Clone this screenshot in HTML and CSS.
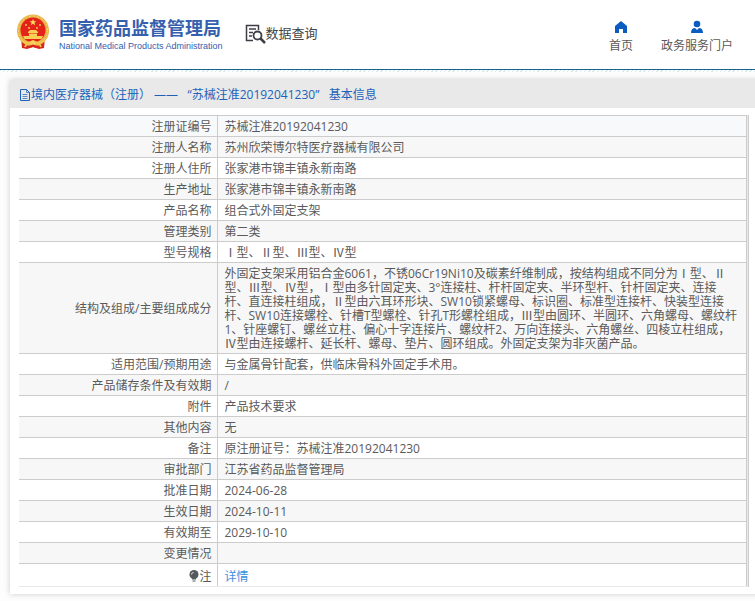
FILE: index.html
```html
<!DOCTYPE html>
<html lang="zh-CN">
<head>
<meta charset="utf-8">
<title>国家药品监督管理局 数据查询</title>
<link rel="stylesheet" href="styles.css">
</head>
<body>
<header class="header">
  <a class="brand" href="#">
    <svg class="emblem" viewBox="0 0 34 36" aria-hidden="true">
      <path fill="#d9261c" d="M5 24h24l-1 10-5 1-6-2-6 2-5-1z"/>
      <circle cx="17" cy="16.500" r="16" fill="#e9b548"/>
      <circle cx="17" cy="16.500" r="14.500" fill="none" stroke="#f7d876" stroke-dasharray="2 2"/>
      <circle cx="17" cy="16" r="12.500" fill="#e32219"/>
      <path fill="#fbdc63" d="M17 5l.9 2.300h2.500l-2 1.500.8 2.400-2.200-1.500-2.200 1.500.8-2.400-2-1.500h2.500z"/>
      <g fill="#f8cf55">
        <circle cx="10" cy="11" r=".9"/><circle cx="13" cy="14" r=".9"/><circle cx="21" cy="14" r=".9"/><circle cx="24" cy="11" r=".9"/>
        <path d="M12 18l2-2h6l2 2v1H12zM13 19.500h8V22h-8zM7 22h20l-1.500 3h-17z"/>
      </g>
      <path fill="none" stroke="#f4c64f" stroke-width="1.800" d="M5 26c4 4 8 3 12 1 4 2 8 3 12-1M9 33c1-3 4-5 8-5s7 2 8 5"/>
      <circle cx="17" cy="29" r="2.600" fill="#f7d060"/>
      <path fill="#d9261c" d="M12 32l5-1.500 5 1.500-1 2-4-1-4 1z"/>
    </svg>
    <span class="brand-text">
      <span class="brand-cn">国家药品监督管理局</span>
      <span class="brand-en">National Medical Products Administration</span>
    </span>
  </a>
  <a class="query" href="#">
    <svg class="query-icon" viewBox="0 0 21 20" fill="none" stroke="#3e3e46" aria-hidden="true">
      <path stroke-width="1.500" d="M8 16.500H1.500v-15h12V6M4 5h7M4 8.500h4M4 12h3"/>
      <circle cx="12.500" cy="11.500" r="4" stroke-width="1.800"/>
      <path stroke-width="2.500" d="M15.500 14.500l4.500 4.500"/>
    </svg>
    <span>数据查询</span>
  </a>
  <nav class="nav">
    <a href="#">
      <svg viewBox="0 0 14 14" aria-hidden="true"><path fill="#0a5cc0" d="M7 1l6 5v7H9V9H5v4H1V6z"/></svg>
      <span>首页</span>
    </a>
    <a href="#">
      <svg viewBox="0 0 14 14" aria-hidden="true"><circle cx="7" cy="4" r="3.300" fill="#0a5cc0"/><path fill="#0a5cc0" d="M1 13c0-3.500 1.500-5 4-5l2 2 2-2c2.500 0 4 1.500 4 5z"/></svg>
      <span>政务服务门户</span>
    </a>
  </nav>
</header>
<main class="panel">
  <h1 class="panel-title">
    <svg class="doc-icon" viewBox="0 0 12 12" fill="none" stroke="#1c62b9" aria-hidden="true"><path d="M1.500.5h6l3 3v8h-9z"/><path stroke-width=".7" d="M7.500.5v3h3M3.500 5.500h5M3.500 7.500h5M3.500 9.500h5"/></svg>
    <span>境内医疗器械（注册） ——   “苏械注准20192041230”   基本信息</span>
  </h1>
  <div class="table-wrap">
    <table class="info">
      <tr class="first"><th scope="row">注册证编号</th><td>苏械注准20192041230</td></tr>
      <tr><th scope="row">注册人名称</th><td>苏州欣荣博尔特医疗器械有限公司</td></tr>
      <tr><th scope="row">注册人住所</th><td>张家港市锦丰镇永新南路</td></tr>
      <tr><th scope="row">生产地址</th><td>张家港市锦丰镇永新南路</td></tr>
      <tr><th scope="row">产品名称</th><td>组合式外固定支架</td></tr>
      <tr><th scope="row">管理类别</th><td>第二类</td></tr>
      <tr><th scope="row">型号规格</th><td>Ⅰ型、Ⅱ型、Ⅲ型、Ⅳ型</td></tr>
      <tr><th scope="row">结构及组成/主要组成成分</th><td>外固定支架采用铝合金6061，不锈06Cr19Ni10及碳素纤维制成，按结构组成不同分为Ⅰ型、Ⅱ型、Ⅲ型、Ⅳ型，Ⅰ型由多针固定夹、3°连接柱、杆杆固定夹、半环型杆、针杆固定夹、连接杆、直连接柱组成，Ⅱ型由六耳环形块、SW10锁紧螺母、标识圈、标准型连接杆、快装型连接杆、SW10连接螺栓、针槽T型螺栓、针孔T形螺栓组成，Ⅲ型由圆环、半圆环、六角螺母、螺纹杆1、针座螺钉、螺丝立柱、偏心十字连接片、螺纹杆2、万向连接头、六角螺丝、四棱立柱组成，Ⅳ型由连接螺杆、延长杆、螺母、垫片、圆环组成。外固定支架为非灭菌产品。</td></tr>
      <tr><th scope="row">适用范围/预期用途</th><td>与金属骨针配套，供临床骨科外固定手术用。</td></tr>
      <tr><th scope="row">产品储存条件及有效期</th><td>/</td></tr>
      <tr><th scope="row">附件</th><td>产品技术要求</td></tr>
      <tr><th scope="row">其他内容</th><td>无</td></tr>
      <tr><th scope="row">备注</th><td>原注册证号：苏械注准20192041230</td></tr>
      <tr><th scope="row">审批部门</th><td>江苏省药品监督管理局</td></tr>
      <tr><th scope="row">批准日期</th><td>2024-06-28</td></tr>
      <tr><th scope="row">生效日期</th><td>2024-10-11</td></tr>
      <tr><th scope="row">有效期至</th><td>2029-10-10</td></tr>
      <tr><th scope="row">变更情况</th><td></td></tr>
      <tr class="note"><th scope="row"><svg class="bulb" viewBox="0 0 10 12" aria-hidden="true"><circle cx="5" cy="4.500" r="4.500" fill="#55585c"/><path fill="#55585c" d="M3 8h4v1.500H3zM3.500 10.500h3v1h-3z"/><path fill="none" stroke="#ddd" d="M2.500 4.500a2 2 0 0 1 2-2"/></svg>注</th><td><a href="#">详情</a></td></tr>
    </table>
  </div>
</main>
</body>
</html>
```
FILE: styles.css
```css
* {
  box-sizing: border-box;
}

body {
  margin: 0;
  background: #fdfdfd;
  color: #5a5a5a;
  font-family: "Open Sans", "Noto Sans CJK SC", sans-serif;
  font-size: 12px;
  line-height: 14px;
  overflow-x: hidden;
}

a {
  color: inherit;
  text-decoration: none;
}

svg {
  flex: none;
}

.header {
  position: relative;
  display: flex;
  align-items: flex-start;
  height: 70px;
  padding: 14px 22px 0 16px;
  background: #fff;
  border-bottom: 1px solid #17648c;
}

.header::after {
  content: "";
  position: absolute;
  top: calc(100% + 1px);
  left: 0;
  right: 0;
  height: 2px;
  background: repeating-linear-gradient(135deg, #d8e8f0 0 1px, #fff 1px 3px);
}

.brand {
  display: flex;
  gap: 9px;
}

.emblem {
  width: 34px;
  height: 36px;
}

.brand-text {
  display: flex;
  flex-direction: column;
  padding-top: 1px;
  color: #3560ae;
  white-space: nowrap;
}

.brand-cn {
  font-size: 18px;
  font-weight: 700;
  line-height: 26px;
}

.brand-en {
  font-family: "Liberation Sans", sans-serif;
  font-size: 9px;
  line-height: 10px;
}

.query {
  display: flex;
  margin: 10px 0 0 22px;
  color: #444;
  font-size: 13px;
  line-height: 18px;
}

.query-icon {
  width: 21px;
  height: 20px;
}

.nav {
  display: flex;
  gap: 28px;
  margin: 6px 0 0 auto;
}

.nav a {
  display: flex;
  flex-direction: column;
  align-items: center;
  gap: 4px;
  line-height: 16px;
}

.nav svg {
  width: 14px;
  height: 14px;
}

.panel {
  margin: 10px -10px 6px 10px;
  padding-bottom: 7px;
  background: #fff;
  box-shadow: 0 0 6px #ccc;
}

.panel-title {
  display: flex;
  align-items: center;
  height: 28px;
  margin: 0 0 7px;
  padding: 2px 0 0 9px;
  background: #e9e9e9;
  color: #1c62b9;
  font-size: 12px;
  font-weight: 400;
  white-space: pre;
}

.doc-icon {
  width: 12px;
  height: 12px;
}

.table-wrap {
  margin: 0 16px 0 9px;
  border-right: 1px solid #ccc;
  background: #e9e9e9;
  padding-right: 1px;
}

.info {
  width: 100%;
  border-collapse: collapse;
  background: #fff;
  border-right: 1px solid #ccc;
}

.info th,
.info td {
  padding: 4px 5px 2px;
  border: 1px solid #ccc;
  border-left: 0;
  height: 21px;
  font-weight: 400;
}

.info th {
  width: 198px;
  text-align: right;
}

.info td {
  padding-left: 7px;
  padding-right: 6px;
}

.info tr:nth-child(even) {
  background: #f7f7f7;
}

.info .first {
  background: #f7f9fb;
}

.info .note th,
.info .note td {
  height: 23px;
  padding-top: 5px;
  border-bottom-color: #e9e9e9;
}

.info .note a {
  color: #3b8ee0;
}

.bulb {
  width: 10px;
  height: 12px;
  vertical-align: -1px;
}
```
